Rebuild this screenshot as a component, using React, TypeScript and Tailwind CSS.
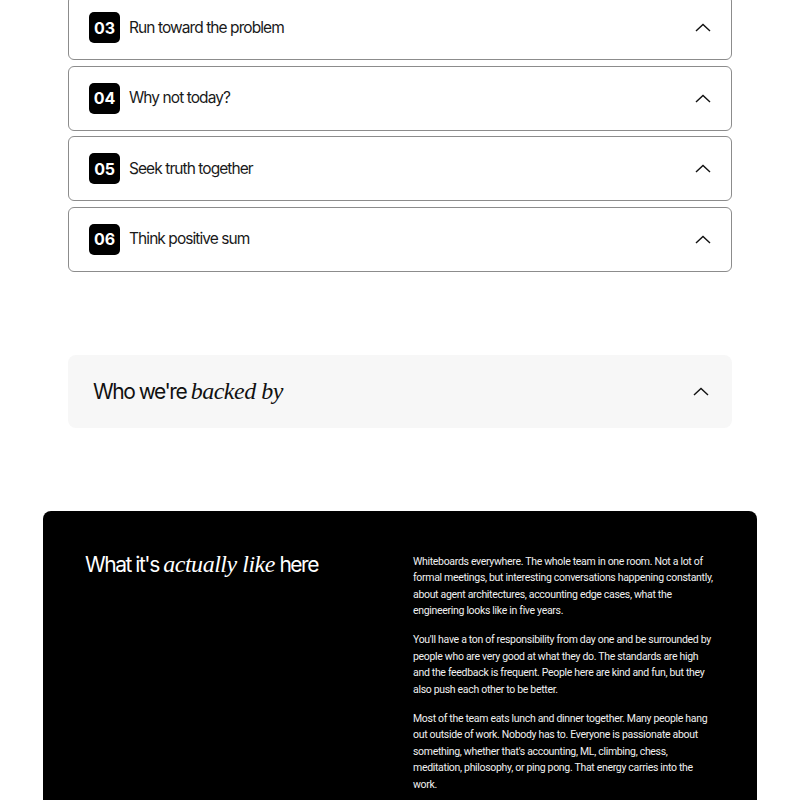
import React from "react";

const sans = { fontFamily: "Inter, 'Liberation Sans', sans-serif" };
const serif = { fontFamily: "'Liberation Serif', serif" };

function Chevron() {
  return (
    <svg width="16" height="9" viewBox="0 0 16 9" fill="none" className="shrink-0">
      <path d="M1.5 7.5 L8 1.5 L14.5 7.5" stroke="#111" strokeWidth="1.4" strokeLinecap="square" />
    </svg>
  );
}

const items = [
  ["03", "Run toward the problem"],
  ["04", "Why not today?"],
  ["05", "Seek truth together"],
  ["06", "Think positive sum"],
];

export default function App() {
  return (
    <div className="w-[800px] h-[800px] overflow-hidden bg-white" style={sans}>
      <div className="mx-[68px] -mt-[5px] flex flex-col gap-[5.5px]">
        {items.map(([n, t]) => (
          <div
            key={n}
            className="h-[65px] rounded-[6px] border border-[#8c8c8c] flex items-center pl-[20px] pr-[20px]"
          >
            <div className="w-[31px] h-[31px] rounded-[5px] bg-black text-white flex items-center justify-center text-[16px] font-bold tracking-[-0.01em]">
              {n}
            </div>
            <div className="ml-[9px] text-[15.5px] text-[#1a1a1a] tracking-[-0.06em] flex-1">{t}</div>
            <Chevron />
          </div>
        ))}
      </div>

      <div className="mx-[68px] mt-[83px] h-[73px] rounded-[8px] bg-[#f7f7f7] flex items-center pl-[25px] pr-[23px]">
        <div className="flex-1 text-[21px] text-[#111] tracking-[-0.07em]">
          Who we're{" "}
          <span className="italic text-[24px] tracking-[-0.02em]" style={serif}>
            backed by
          </span>
        </div>
        <Chevron />
      </div>

      <div className="mx-[43px] mt-[83px] h-[400px] rounded-t-[8px] bg-black flex pl-[42px] pr-[41px] pt-[38px]">
        <div className="flex-1 text-[21px] text-white tracking-[-0.07em] leading-[30px]">
          What it's{" "}
          <span className="italic text-[24px] tracking-[-0.02em]" style={serif}>
            actually like
          </span>{" "}
          here
        </div>
        <div
          className="w-[303px] mt-[5px] text-[10.5px] leading-[16.5px] text-[#f0f0f0] tracking-[-0.03em] flex flex-col gap-[12.5px]"
          style={{ fontFamily: "Roboto, 'Liberation Sans', sans-serif" }}
        >
          <p>
            Whiteboards everywhere. The whole team in one room. Not a lot of formal meetings, but interesting
            conversations happening constantly, about agent architectures, accounting edge cases, what the
            engineering looks like in five years.
          </p>
          <p>
            You'll have a ton of responsibility from day one and be surrounded by people who are very good at what
            they do. The standards are high and the feedback is frequent. People here are kind and fun, but they
            also push each other to be better.
          </p>
          <p>
            Most of the team eats lunch and dinner together. Many people hang out outside of work. Nobody has to.
            Everyone is passionate about something, whether that's accounting, ML, climbing, chess, meditation,
            philosophy, or ping pong. That energy carries into the work.
          </p>
        </div>
      </div>
    </div>
  );
}
